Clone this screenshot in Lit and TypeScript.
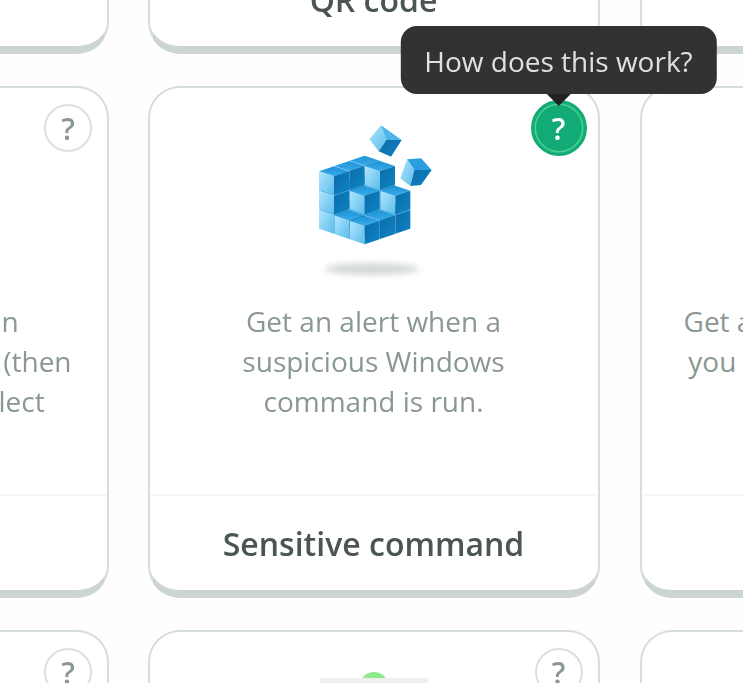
import { LitElement, html, css, svg } from "lit";
import { customElement } from "lit/decorators.js";

type Pt = [number, number];
const poly = (pts: Pt[], fill: string) =>
  svg`<polygon points=${pts.map((p) => p.join(",")).join(" ")} fill=${fill} />`;

function cube(cx: number, cy: number, hw = 45, hh = 15, h = 56) {
  return svg`
    ${poly([[cx - hw, cy - hh], [cx, cy - 2 * hh], [cx + hw, cy - hh], [cx, cy]], "url(#ct)")}
    ${poly([[cx - hw, cy - hh], [cx, cy], [cx, cy + h], [cx - hw, cy + h - hh]], "url(#cl)")}
    ${poly([[cx, cy], [cx + hw, cy - hh], [cx + hw, cy + h - hh], [cx, cy + h]], "url(#cd)")}`;
}

// Lattice position: a = steps to the back-left, b = steps to the back-right, k = layer.
const at = (a: number, b: number, k: number) => cube(251 - a * 46 + b * 46, 377 - 16 * (a + b) - 58 * k);

const LATTICE: [number, number, number][] = [
  [2, 2, 0], [2, 1, 0], [1, 2, 0], [2, 0, 0], [1, 1, 0], [0, 2, 0], [1, 0, 0], [0, 1, 0], [0, 0, 0],
  [2, 2, 1], [2, 1, 1], [1, 2, 1], [2, 0, 1], [1, 1, 1], [0, 2, 1],
  [2, 2, 2], [2, 1, 2], [1, 2, 2], [2, 0, 2],
];

const registry = svg`
  <defs>
    <linearGradient id="cl" x1="0" y1="0" x2="1" y2="1">
      <stop offset="0" stop-color="#b0e6fd" /><stop offset="1" stop-color="#5cbcec" />
    </linearGradient>
    <linearGradient id="ct" x1="0" y1="0" x2="0" y2="1">
      <stop offset="0" stop-color="#1f92d8" /><stop offset="1" stop-color="#38abe8" />
    </linearGradient>
    <linearGradient id="cd" x1="0" y1="0" x2="1" y2="1">
      <stop offset="0" stop-color="#0b6ba8" /><stop offset="1" stop-color="#1184c4" />
    </linearGradient>
    <filter id="soft" x="-20%" y="-20%" width="140%" height="140%"><feGaussianBlur stdDeviation="2" /></filter>
    <filter id="shade" x="-20%" y="-100%" width="140%" height="300%"><feGaussianBlur stdDeviation="9" /></filter>
  </defs>
  <ellipse cx="272" cy="507" rx="142" ry="18" fill="#d3d9d7" filter="url(#shade)" />
  <g filter="url(#soft)">
    ${LATTICE.map(([a, b, k]) => at(a, b, k))}
    ${poly([[265, 118], [300, 76], [316, 120], [293, 154]], "url(#cl)")}
    ${poly([[300, 76], [362, 120], [316, 120]], "#4db4ec")}
    ${poly([[316, 120], [362, 120], [330, 170], [293, 154]], "url(#cd)")}
    ${poly([[378, 178], [420, 175], [452, 210], [400, 210]], "#2b9fe0")}
    ${poly([[378, 178], [400, 210], [388, 258], [358, 235]], "url(#cl)")}
    ${poly([[400, 210], [452, 210], [420, 255], [388, 258]], "url(#cd)")}
  </g>`;

@customElement("app-root")
export class AppRoot extends LitElement {
  static styles = css`
    :host {
      display: block;
      width: 743px;
      height: 683px;
      overflow: hidden;
      background: #fefefe;
      font-family: "Open Sans", "Noto Sans", sans-serif;
    }
    .grid {
      display: grid;
      grid-template-columns: 453px 452px 452px;
      column-gap: 38.5px;
      row-gap: 32px;
      grid-auto-rows: 512px;
      margin: -458px 0 0 -344px;
      width: 1500px;
      filter: blur(0.6px);
    }
    .card {
      box-sizing: border-box;
      position: relative;
      display: flex;
      flex-direction: column;
      background: #fff;
      border: 2px solid #d6dedb;
      border-bottom: 8px solid #ccd5d1;
      border-radius: 32px;
    }
    .card:nth-child(3n) {
      margin-left: 2px;
    }
    .body {
      flex: 1;
      padding-top: 12px;
      text-align: center;
    }
    .pic {
      display: block;
      width: 180px;
      height: 190px;
      margin: 0 auto 11px;
    }
    .empty {
      height: 190px;
      margin-bottom: 11px;
    }
    p {
      margin: 0;
      font-size: 28px;
      line-height: 40px;
      color: #8a9892;
    }
    .foot {
      height: 94px;
      border-top: 2px solid #f4f6f5;
      display: flex;
      align-items: center;
      justify-content: center;
      font-size: 32px;
      font-weight: 600;
      color: #4b5654;
    }
    .help {
      position: absolute;
      top: 16px;
      right: 15px;
      box-sizing: border-box;
      width: 48px;
      height: 48px;
      border: 2px solid #d9e1de;
      border-radius: 50%;
      display: flex;
      align-items: center;
      justify-content: center;
      font-size: 30px;
      font-weight: 600;
      color: #8a9892;
    }
    .help.on {
      top: 12px;
      right: 11px;
      width: 56px;
      height: 56px;
      background: #12ab75;
      border: 2px solid #12ab75;
      box-shadow: inset 0 0 0 1.5px #12ab75, inset 0 0 0 3px #4ccf90;
      color: #fff;
    }
    .tip {
      position: absolute;
      z-index: 2;
      bottom: 60px;
      left: 50%;
      transform: translateX(-50%);
      white-space: nowrap;
      padding: 15px 24px 13px;
      height: 68px;
      box-sizing: border-box;
      background: rgba(42, 42, 42, 0.96);
      border-radius: 16px;
      font-size: 28px;
      line-height: 40px;
      font-weight: 400;
      color: #e0e0e0;
    }
    .tip::after {
      content: "";
      position: absolute;
      top: 100%;
      left: 50%;
      margin-left: -12px;
      border: 12px solid transparent;
      border-top-color: #222;
      border-bottom: 0;
    }
    .badge {
      position: relative;
      display: block;
      width: 108px;
      height: 14px;
      margin: 28px auto 0;
    }
    .dome {
      position: absolute;
      left: 40px;
      top: 0;
      width: 28px;
      height: 14px;
      border-radius: 14px 14px 0 0;
      background: #8fe98a;
    }
    .bar {
      position: absolute;
      left: 0;
      top: 6px;
      width: 108px;
      height: 8px;
      background: #eef0ef;
    }
  `;

  private help(on = false) {
    return html`<div class="help ${on ? "on" : ""}">?${on
      ? html`<div class="tip">How does this work?</div>`
      : ""}</div>`;
  }

  private card(title: string, lines: string[], opts: { pic?: boolean; help?: boolean; on?: boolean; badge?: boolean } = {}) {
    return html`<div class="card">
      ${opts.help ? this.help(opts.on) : ""}
      <div class="body">
        ${opts.badge
          ? html`<div class="badge"><span class="dome"></span><span class="bar"></span></div>`
          : opts.pic
            ? html`<svg class="pic" viewBox="9 0 540 570">${registry}</svg>`
            : html`<div class="empty"></div>`}
        ${opts.badge ? "" : html`<p>${lines.map((l) => html`${l}<br />`)}</p>`}
      </div>
      ${title ? html`<div class="foot">${title}</div>` : ""}
    </div>`;
  }

  render() {
    return html`<div class="grid">
      ${this.card("Image", [])}
      ${this.card("QR code", [])}
      ${this.card("Website", [])}
      ${this.card(
        "Custom image",
        ["Get an alert when an", "image is opened online (then", "upload a page and select"],
        { help: true },
      )}
      ${this.card(
        "Sensitive command",
        ["Get an alert when a", "suspicious Windows", "command is run."],
        { pic: true, help: true, on: true },
      )}
      ${this.card(
        "Web bug",
        ["Get an alert when a website", "you choose has visitors too"],
        {},
      )}
      ${this.card("", [], { help: true })}
      ${this.card("", [], { help: true, badge: true })}
      ${this.card("", [])}
    </div>`;
  }
}
